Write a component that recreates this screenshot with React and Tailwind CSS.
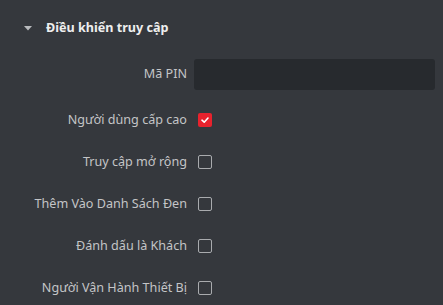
import React from "react";

function Box({ checked }) {
  if (checked) {
    return (
      <span className="ml-[4px] flex h-[14px] w-[14px] items-center justify-center rounded-[2px] bg-[#e8222d]">
        <svg width="10" height="10" viewBox="0 0 10 10" fill="none">
          <path d="M2 5.2 L4.2 7.2 L8 3" stroke="#ffffff" strokeWidth="1.6" strokeLinecap="round" strokeLinejoin="round" />
        </svg>
      </span>
    );
  }
  return <span className="ml-[4px] block h-[14px] w-[14px] rounded-[2px] border border-[#a9abae]" />;
}

const rows = [
  ["Người dùng cấp cao", true],
  ["Truy cập mở rộng", false],
  ["Thêm Vào Danh Sách Đen", false],
  ["Đánh dấu là Khách", false],
  ["Người Vận Hành Thiết Bị", false],
];

export default function App() {
  return (
    <div
      className="h-[305px] w-[443px] overflow-hidden bg-[#35383d] pt-[18px]"
      style={{ fontFamily: '"Noto Sans", "Open Sans", sans-serif' }}
    >
      <div className="flex h-[20px] items-center">
        <svg className="ml-[24px]" width="8" height="5" viewBox="0 0 8 5">
          <path d="M0 0 H8 L4 4.5 Z" fill="#b9bbbe" />
        </svg>
        <span className="ml-[14px] text-[12.6px] font-bold text-[#eeeeee]">Điều khiển truy cập</span>
      </div>
      <div className="mt-[21px] flex items-center">
        <span className="w-[187px] text-right text-[12.6px] text-[#c4c5c7]">Mã PIN</span>
        <div className="ml-[7px] h-[31px] w-[241px] rounded-[3px] bg-[#272a2e]" />
      </div>
      <div className="mt-[9px] flex flex-col">
        {rows.map(([label, checked]) => (
          <div key={label} className="flex h-[42px] items-center">
            <span className="w-[187px] text-right text-[12.6px] text-[#c4c5c7]">{label}</span>
            <div className="ml-[7px] flex items-center">
              <Box checked={checked} />
            </div>
          </div>
        ))}
      </div>
    </div>
  );
}
